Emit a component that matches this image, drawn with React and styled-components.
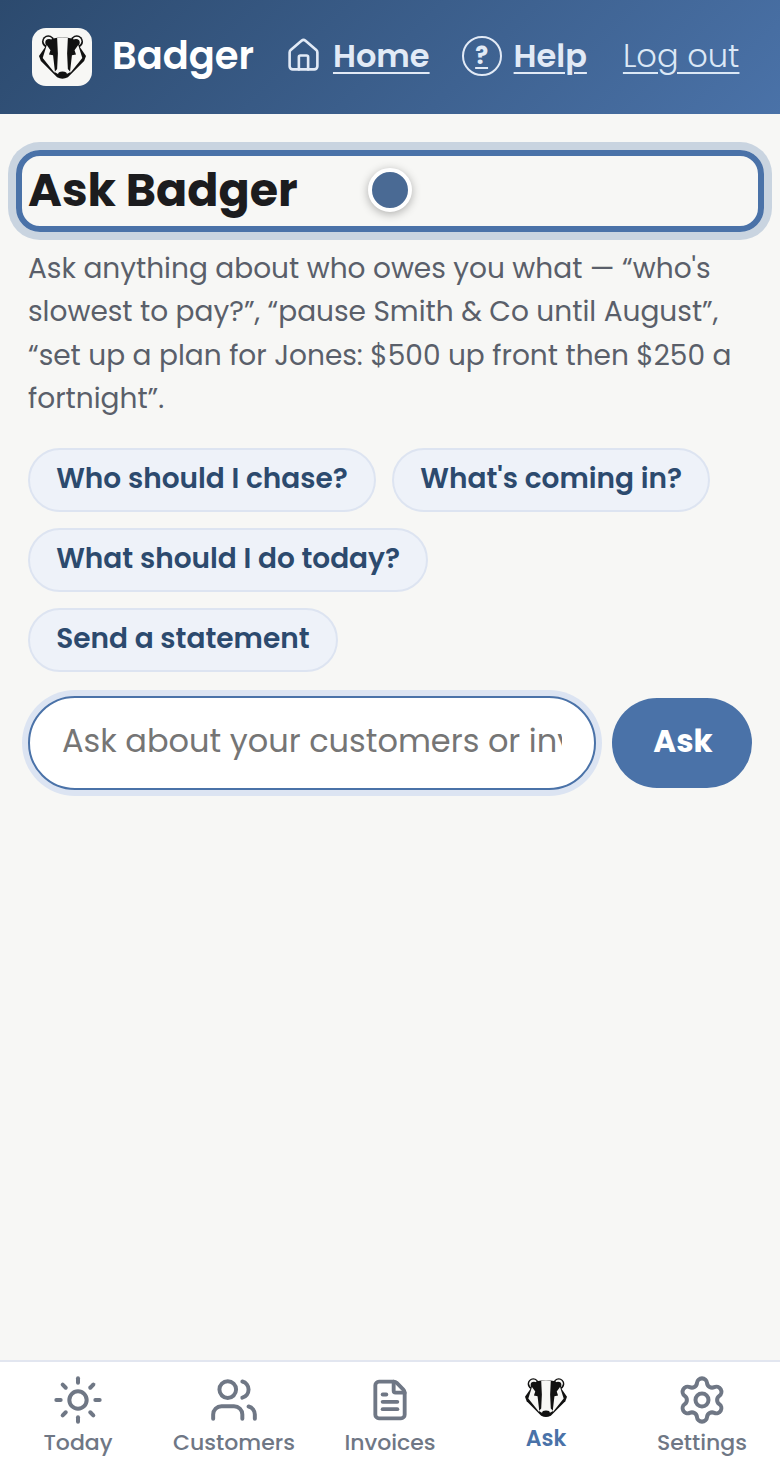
import styled, { createGlobalStyle } from "styled-components";
import { House, Sun, Users, FileText, Settings } from "lucide-react";

const GlobalStyle = createGlobalStyle`
  * { box-sizing: border-box; }
  html, body { margin: 0; padding: 0; }
  body {
    background: #f7f7f5;
    font-family: "Poppins", "Inter", "Noto Sans", sans-serif;
  }
`;

const Page = styled.div`
  position: relative;
  display: flex;
  flex-direction: column;
  min-height: 1480px;
`;

const Header = styled.header`
  display: flex;
  align-items: center;
  height: 114px;
  padding: 0 40px 0 32px;
  background: linear-gradient(135deg, #2c4a6e 0%, #4a72a8 100%);
`;

const LogoTile = styled.div`
  display: flex;
  align-items: center;
  justify-content: center;
  width: 60px;
  height: 58px;
  border-radius: 14px;
  background: #f7f7f5;
`;

const Brand = styled.span`
  margin-left: 20px;
  padding-bottom: 4px;
  color: #fff;
  font-size: 38.4px;
  font-weight: 600;
  white-space: nowrap;
`;

const NavLink = styled.a`
  display: flex;
  align-items: center;
  gap: ${(p) => p.$gap || 0}px;
  margin-left: ${(p) => p.$left}px;
  padding-bottom: 3px;
  color: ${(p) => (p.$light ? "#dbe8f6" : "#e2eaf6")};
  font-size: 32px;
  font-weight: ${(p) => (p.$light ? 300 : 600)};
  line-height: 40px;
  text-decoration: none;
  white-space: nowrap;
  svg {
    flex: none;
  }
  span {
    text-decoration: underline;
    text-decoration-thickness: 2px;
    text-underline-offset: 5px;
  }
`;

const HelpBadge = styled.b`
  display: flex;
  align-items: center;
  justify-content: center;
  width: 40px;
  height: 40px;
  border: 2px solid #e2eaf6;
  border-radius: 50%;
  font-size: 24px;
  font-weight: 700;
  text-decoration: underline;
  text-decoration-thickness: 2px;
  text-underline-offset: 3px;
`;

const Main = styled.main`
  flex: 1;
  padding: 36px 28px 0;
`;

const Title = styled.h1`
  margin: 0 -12px;
  padding: 0 6px;
  height: 82px;
  border: 6px solid #4a72a8;
  border-radius: 24px;
  box-shadow: 0 0 0 8px #c9d4e0;
  color: #1c1c1e;
  font-size: 46px;
  font-weight: 700;
  line-height: 68px;
`;

const FocusDot = styled.div`
  position: absolute;
  top: 168px;
  left: 368px;
  width: 44px;
  height: 44px;
  border: 4px solid #fff;
  border-radius: 50%;
  background: #4a6a94;
  box-shadow: 0 2px 10px rgba(0, 0, 0, 0.3);
`;

const Intro = styled.p`
  margin: 14.7px 0 0;
  color: #5a5f6a;
  font-size: 28px;
  line-height: 43.4px;
`;

const Chips = styled.div`
  display: flex;
  flex-wrap: wrap;
  gap: 16px;
  margin-top: 27.3px;
`;

const Chip = styled.button`
  height: 64px;
  padding: 0 26.2px 2px;
  border: 2px solid #dde4f1;
  border-radius: 32px;
  background: #eef2f9;
  color: #2c4a6e;
  font-family: inherit;
  font-size: 28px;
  font-weight: 600;
  white-space: nowrap;
`;

const AskForm = styled.form`
  display: flex;
  align-items: center;
  gap: 16px;
  margin-top: 24px;
`;

const AskInput = styled.input`
  flex: 1;
  min-width: 0;
  height: 94px;
  padding: 0 32px 4px;
  border: 2px solid #4a72a8;
  border-radius: 47px;
  outline: none;
  background: #fff;
  box-shadow: 0 0 0 6px #dce4f2;
  color: #1c1c1e;
  font-family: inherit;
  font-size: 32px;
  &::placeholder {
    color: #757575;
    opacity: 1;
  }
`;

const AskButton = styled.button`
  width: 140px;
  height: 90px;
  padding: 0 0 2px 2px;
  border: 0;
  border-radius: 45px;
  background: #4a72a8;
  color: #fff;
  font-family: inherit;
  font-size: 31px;
  font-weight: 700;
`;

const BottomNav = styled.nav`
  display: grid;
  grid-template-columns: repeat(5, 1fr);
  height: 120px;
  border-top: 2px solid #e2e6f0;
  background: #fff;
`;

const Tab = styled.a`
  display: flex;
  flex-direction: column;
  align-items: center;
  padding-top: 16px;
  color: ${(p) => (p.$active ? "#4a72a8" : "#6f7785")};
  font-size: 22px;
  font-weight: ${(p) => (p.$active ? 600 : 500)};
  line-height: 34px;
`;

const TabIcon = styled.span`
  display: flex;
  align-items: center;
  justify-content: center;
  width: 44px;
  height: ${(p) => (p.$active ? 40 : 44)}px;
  margin-bottom: 4px;
  svg {
    flex: none;
  }
`;

const BadgerLogo = ({ size = 46 }) => (
  <svg viewBox="0 0 127 120" width={size} height={(size * 120) / 127} aria-hidden="true">
    <circle cx="25" cy="18" r="17" fill="#111" />
    <circle cx="102" cy="18" r="17" fill="#111" />
    <circle cx="25" cy="17" r="12.5" fill="#f7f7f5" />
    <circle cx="102" cy="17" r="12.5" fill="#f7f7f5" />
    <circle cx="27" cy="21" r="10" fill="#111" />
    <circle cx="100" cy="21" r="10" fill="#111" />
    <path d="M0 57L20 28L35 10Q63 4 92 10L107 28L127 57L122 70L78 114Q63 122 49 114L5 70Z" fill="#111" />
    <path d="M49 8Q63 5 78 8L76 50L78 92L85 100L63 112L42 100L49 92L51 50Z" fill="#f7f7f5" />
    <path d="M21 27L31 41L27 53L38 55L43 98L42 102L10 62Z" fill="#f7f7f5" />
    <path d="M106 27L96 41L100 53L89 55L84 98L85 102L117 62Z" fill="#f7f7f5" />
    <ellipse cx="63.5" cy="106" rx="12" ry="7.5" fill="#111" />
  </svg>
);

const tabs = [
  { label: "Today", Icon: Sun, size: 52, stroke: 1.85 },
  { label: "Customers", Icon: Users, size: 50, stroke: 1.9 },
  { label: "Invoices", Icon: FileText, size: 44, stroke: 2.1 },
  { label: "Ask", active: true },
  { label: "Settings", Icon: Settings, size: 52, stroke: 1.85 },
];

const prompts = [
  "Who should I chase?",
  "What's coming in?",
  "What should I do today?",
  "Send a statement",
];

export default function App() {
  return (
    <Page>
      <GlobalStyle />
      <Header>
        <LogoTile>
          <BadgerLogo size={47} />
        </LogoTile>
        <Brand>Badger</Brand>
        <NavLink $left={31} $gap={11}>
          <House size={37} strokeWidth={1.7} />
          <span>Home</span>
        </NavLink>
        <NavLink $left={32} $gap={12}>
          <HelpBadge>?</HelpBadge>
          <span>Help</span>
        </NavLink>
        <NavLink $left={36} $light>
          <span>Log out</span>
        </NavLink>
      </Header>
      <Main>
        <Title>Ask Badger</Title>
        <Intro>
          Ask anything about who owes you what — “who's slowest to pay?”, “pause
          Smith &amp; Co until August”, “set up a plan for Jones: $500 up front
          then $250 a fortnight”.
        </Intro>
        <Chips>
          {prompts.map((text) => (
            <Chip key={text} type="button">
              {text}
            </Chip>
          ))}
        </Chips>
        <AskForm onSubmit={(e) => e.preventDefault()}>
          <AskInput placeholder="Ask about your customers or invoices…" />
          <AskButton>Ask</AskButton>
        </AskForm>
      </Main>
      <FocusDot />
      <BottomNav>
        {tabs.map(({ label, Icon, size, stroke, active }) => (
          <Tab key={label} $active={active}>
            <TabIcon $active={active}>
              {active ? <BadgerLogo size={42} /> : <Icon size={size} strokeWidth={stroke} />}
            </TabIcon>
            {label}
          </Tab>
        ))}
      </BottomNav>
    </Page>
  );
}
